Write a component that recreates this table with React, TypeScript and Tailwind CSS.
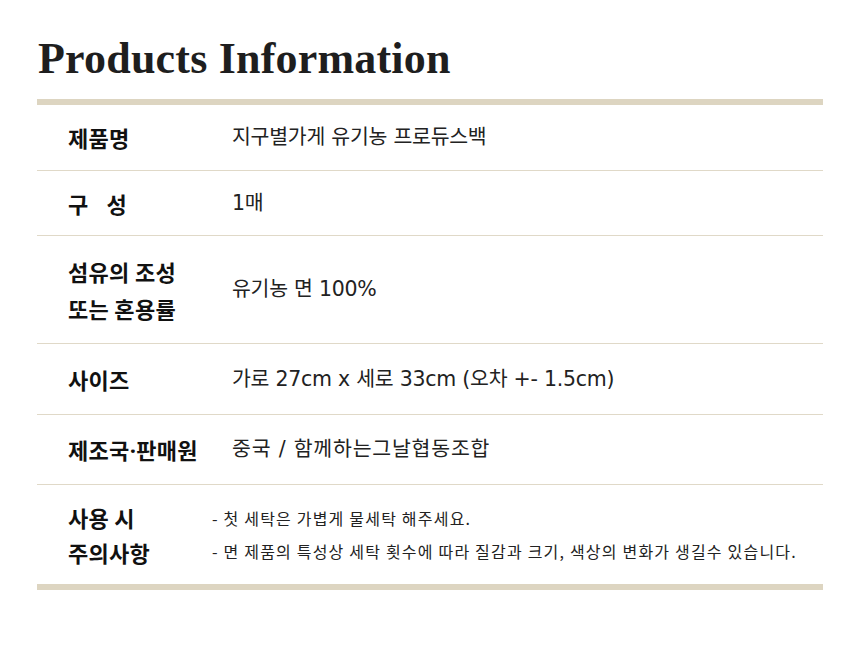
import React from "react";

const kr = { fontFamily: '"Noto Sans CJK KR", "Noto Sans", sans-serif' };
const val = { fontFamily: '"DejaVu Sans", "Noto Sans CJK KR", sans-serif' };

function Row({
  label,
  children,
  h,
  last,
}: {
  label: React.ReactNode;
  children: React.ReactNode;
  h: string;
  last?: boolean;
}) {
  return (
    <div className={`flex items-center ${h} ${last ? "" : "border-b border-[#e0d9c8]"}`}>
      {label}
      {children}
    </div>
  );
}

const labelCls = "w-[195px] shrink-0 pl-[31px] text-[22px] tracking-[0.3px] font-bold text-[#111]";
const valueCls = "text-[20.5px] tracking-[-0.25px] text-[#222]";

export default function App() {
  return (
    <div className="w-[860px] h-[650px] bg-white" style={kr}>
      <div className="pl-[37px] pt-[34px]">
        <h1
          className="text-[44px] leading-[50px] font-bold text-[#1e1e1e] pl-px tracking-[0.2px]"
          style={{ fontFamily: '"Liberation Serif", serif' }}
        >
          Products Information
        </h1>
        <div className="mt-[15px] w-[786px] border-t-[6px] border-b-[6px] border-[#ddd5c1]">
          <Row h="h-[66px]" label={<div className={labelCls}>제품명</div>}>
            <div className={valueCls} style={val}>지구별가게 유기농 프로듀스백</div>
          </Row>
          <Row
            h="h-[65px]"
            label={
              <div className={labelCls}>
                <span>구</span>
                <span className="ml-[18px]">성</span>
              </div>
            }
          >
            <div className={valueCls} style={val}>1매</div>
          </Row>
          <Row
            h="h-[108px]"
            label={
              <div className={`${labelCls} leading-[37px]`}>
                <div>섬유의 조성</div>
                <div>또는 혼용률</div>
              </div>
            }
          >
            <div className={valueCls} style={val}>유기농 면 100%</div>
          </Row>
          <Row h="h-[71px]" label={<div className={labelCls}>사이즈</div>}>
            <div className={valueCls} style={val}>가로 27cm x 세로 33cm (오차 +- 1.5cm)</div>
          </Row>
          <Row
            h="h-[70px]"
            label={
              <div className={labelCls}>
                제조국<span style={{ fontFamily: '"Open Sans", sans-serif' }}>·</span>판매원
              </div>
            }
          >
            <div className="text-[20.5px] tracking-[0.8px] text-[#222]" style={val}>
              중국 / 함께하는그날협동조합
            </div>
          </Row>
          <Row
            h="h-[99px]"
            last
            label={
              <div className="w-[175px] shrink-0 pl-[31px] text-[22px] tracking-[0.3px] leading-[35px] font-bold text-[#111]">
                <div>사용 시</div>
                <div>주의사항</div>
              </div>
            }
          >
            <div className="text-[16px] leading-[33px] tracking-[1.2px] text-[#222]">
              <div>- 첫 세탁은 가볍게 물세탁 해주세요.</div>
              <div>- 면 제품의 특성상 세탁 횟수에 따라 질감과 크기, 색상의 변화가 생길수 있습니다.</div>
            </div>
          </Row>
        </div>
      </div>
    </div>
  );
}
